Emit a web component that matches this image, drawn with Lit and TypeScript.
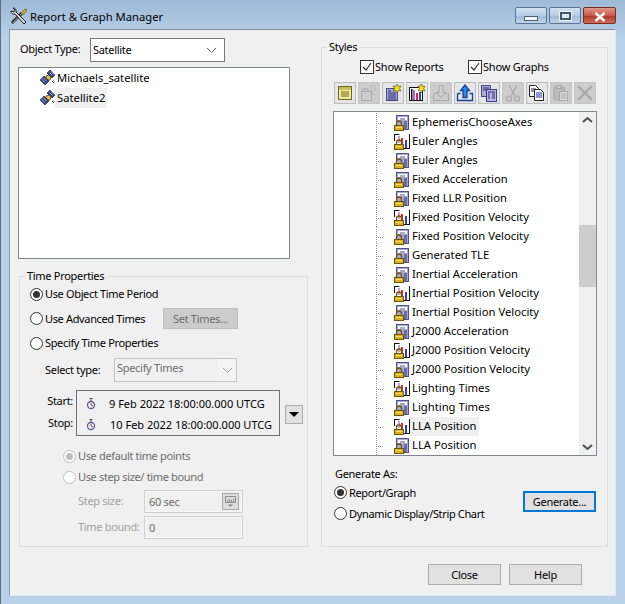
import { LitElement, css, html, svg } from "lit";
import { customElement } from "lit/decorators.js";
import { classMap } from "lit/directives/class-map.js";

const lock = svg`
  <path d="M2.500 11V8.500a2.500 2.500 0 0 1 5 0V11" fill="none" stroke="#6f5508" stroke-width="1.300"/>
  <rect x=".5" y="10.500" width="9" height="5" fill="#e0ae1c" stroke="#6f5508"/>
  <rect x="2" y="12" width="6" height="1" fill="#f8e07a"/>`;

const reportIcon = html`<svg class="ico" width="16" height="16" viewBox="0 0 16 16">
  <rect x="2.500" y=".5" width="12" height="14" fill="#a9a9d6" stroke="#50508e"/>
  <rect x="4" y="2" width="9" height="3" fill="#fff"/>
  <path d="M6 4h5" stroke="#50508e"/>
  <path d="M10 7h3M10 9h3M10 11h3M10 13h3" stroke="#2c2c78"/>
  ${lock}
</svg>`;

const graphIcon = html`<svg class="ico" width="16" height="16" viewBox="0 0 16 16">
  <rect x="1" y=".5" width="14" height="14" fill="#fff"/>
  <path d="M.5 0v7M.5 .5h5M15.500 0v15M10 14.500h6" stroke="#111" fill="none"/>
  <rect x="4" y="2" width="2" height="7" fill="#c8a0d8"/>
  <rect x="7" y="4" width="2" height="10" fill="#d83030"/>
  <rect x="11" y="6" width="2" height="8" fill="#3040c0"/>
  ${lock}
</svg>`;

const satelliteIcon = html`<svg class="ico" width="16" height="16" viewBox="0 0 16 16">
  <path d="M10 0l5 5-3 3-5-5z" fill="#32407e" stroke="#141a40" stroke-width=".6"/>
  <path d="M4 6l5 5-4 4-5-5z" fill="#32407e" stroke="#141a40" stroke-width=".6"/>
  <path d="M6 6l3-1 2 2-1 3-2 0-2-2z" fill="#e2c23c" stroke="#222" stroke-width=".7"/>
  <path d="M11 1.500l3 3M9.500 2.500l3 3M3 7.500l3.500 3.500M1.500 9l3.500 3.500" stroke="#dfe3f4" stroke-width=".7"/>
  <path d="M12 11l2 2M13.500 10.500l1 1" stroke="#333"/>
</svg>`;

const clockIcon = html`<svg width="10" height="13" viewBox="0 0 10 13">
  <path d="M3.500 1.500h3M5 2v2" stroke="#555" fill="none"/>
  <circle cx="5" cy="8" r="3.500" fill="#f3f3f8" stroke="#5b5b9a" stroke-width="1.300"/>
  <path d="M5 8V6M5 8l2 1" stroke="#a04040"/>
</svg>`;

const toolIcons = [
  html`<svg width="16" height="16" viewBox="0 0 16 16"><rect x="1.500" y="1.500" width="13" height="13" fill="#f3ea96" stroke="#6e6824"/><rect x="2" y="2" width="12" height="3" fill="#c8bd5c"/><path d="M4 7h8M4 9h8M4 11h8" stroke="#6e6824"/></svg>`,
  html`<svg width="18" height="18" viewBox="0 0 18 18" fill="none" stroke="#a8a8a8"><path d="M1.500 7.500h10v9h-10z"/><path d="M3 7V5h5v2"/><circle cx="13" cy="4" r="2.500" stroke-dasharray="1.500 1"/><path d="M12 9l3 2" stroke-dasharray="1.500 1"/></svg>`,
  html`<svg width="18" height="18" viewBox="0 0 18 18"><rect x="2.500" y="4.500" width="11" height="12" fill="#a9a9d6" stroke="#4a4a8a"/><path d="M4 7h3M4 9h8M4 11h8M4 13h8M4 15h8" stroke="#2c2c78"/><path d="M13 0l1.300 2.400L17 2l-1.500 2.400L17 7l-2.700-.6L13 9l-1.300-2.600L9 7l1.500-2.600L9 2l2.700.4z" fill="#f5e10a" stroke="#222" stroke-width=".5"/></svg>`,
  html`<svg width="18" height="18" viewBox="0 0 18 18"><rect x="1.500" y="3.500" width="13" height="13" fill="#fff" stroke="#111"/><rect x="3" y="5" width="1.500" height="11" fill="#111"/><rect x="5" y="6" width="2" height="10" fill="#c060d0"/><rect x="8" y="9" width="2" height="7" fill="#d83030"/><rect x="11" y="8" width="2" height="8" fill="#3040c0"/><path d="M13.500 0l1.200 2.300L17 2l-1.300 2.400L17 7l-2.300-.6L13.500 9l-1.200-2.600L10 7l1.300-2.600L10 2l2.300.3z" fill="#f5e10a" stroke="#222" stroke-width=".5"/></svg>`,
  html`<svg width="18" height="18" viewBox="0 0 18 18" fill="none" stroke="#a8a8a8"><path d="M1.500 9.500v7h15v-7h-3M1.500 9.500h3"/><path d="M7 1.500h4v7h2.500L9 13.500 4.500 8.500H7z"/></svg>`,
  html`<svg width="18" height="18" viewBox="0 0 18 18" fill="none" stroke="#14409a" stroke-width="1.300"><path d="M1.500 9.500v7h15v-7h-3M1.500 9.500h3"/><path d="M7 13.500V6.500H4.500L9 1l4.500 5.500H11v7z" fill="#2f8ee0"/></svg>`,
  html`<svg width="18" height="18" viewBox="0 0 18 18"><rect x="1.500" y="1.500" width="9" height="11" fill="#a9a9d6" stroke="#4a4a8a"/><path d="M3 4h6M3 6h3" stroke="#2c2c78"/><rect x="6.500" y="5.500" width="10" height="12" fill="#b6b6de" stroke="#3c3c80"/><path d="M8 8h7M8 10h2M12 10h3M8 12h2M12 12h3M8 14h2M12 14h3" stroke="#2c2c78"/></svg>`,
  html`<svg width="16" height="18" viewBox="0 0 16 18" fill="none" stroke="#a8a8a8" stroke-width="1.200"><path d="M4 1l6 11M12 1L6 12"/><circle cx="4" cy="14.500" r="2.500"/><circle cx="12" cy="14.500" r="2.500"/></svg>`,
  html`<svg width="18" height="18" viewBox="0 0 18 18"><path d="M1.500 1.500h6l3 3v8h-9z" fill="#fff" stroke="#222"/><path d="M3 5h5M3 7h3" stroke="#222"/><path d="M6.500 5.500h6l3 3v8h-9z" fill="#fff" stroke="#222"/><path d="M8 9h6M8 11h6M8 13h6" stroke="#1c2cb0"/></svg>`,
  html`<svg width="18" height="18" viewBox="0 0 18 18" fill="none" stroke="#a8a8a8" stroke-width="1.200"><rect x="2" y="3" width="10" height="13" rx="1" fill="#bcbcbc"/><rect x="5" y="1.500" width="4" height="3" fill="#d8d8d8"/><path d="M7.500 7.500h8v9h-8z" fill="#dcdcdc"/><path d="M9 10h5M9 12h5M9 14h5"/></svg>`,
  html`<svg width="18" height="18" viewBox="0 0 18 18" stroke="#a8a8a8" stroke-width="2.200"><path d="M2 2l14 14M16 2L2 16"/></svg>`,
];

const toolDisabled = [1, 4, 7, 9, 10];

const styleRows: [string, "r" | "g"][] = [
  ["EphemerisChooseAxes", "r"],
  ["Euler Angles", "g"],
  ["Euler Angles", "r"],
  ["Fixed Acceleration", "r"],
  ["Fixed LLR Position", "r"],
  ["Fixed Position Velocity", "g"],
  ["Fixed Position Velocity", "r"],
  ["Generated TLE", "r"],
  ["Inertial Acceleration", "r"],
  ["Inertial Position Velocity", "g"],
  ["Inertial Position Velocity", "r"],
  ["J2000 Acceleration", "r"],
  ["J2000 Position Velocity", "g"],
  ["J2000 Position Velocity", "r"],
  ["Lighting Times", "g"],
  ["Lighting Times", "r"],
  ["LLA Position", "g"],
  ["LLA Position", "r"],
];

const chevron = html`<svg width="11" height="7" viewBox="0 0 11 7" fill="none" stroke="#606060"><path d="M1 1l4.500 4.500L10 1"/></svg>`;

@customElement("app-root")
export class AppRoot extends LitElement {
  private radio(label: string, on = false, off = false) {
    return html`<label class=${classMap({ opt: true, off })}>
      <span class=${classMap({ radio: true, on })}></span>${label}
    </label>`;
  }

  private check(label: string) {
    return html`<label class="opt chk">
      <svg class="box" width="14" height="14" viewBox="0 0 14 14">
        <rect x=".5" y=".5" width="13" height="13" fill="#fff" stroke="#333"/>
        <path d="M3 7l3 3 5-7" fill="none" stroke="#333" stroke-width="1.200"/>
      </svg>${label}
    </label>`;
  }

  render() {
    return html`
      <div class="window">
        <header class="title">
          <svg width="18" height="18" viewBox="0 0 18 18">
            <path d="M2 16L12 6" stroke="#222" stroke-width="3"/>
            <path d="M3 16l9-10" stroke="#c0c0c0" stroke-width="1"/>
            <path d="M11 7l4-5 2 1-4 5z" fill="#d8b820" stroke="#5a5210" stroke-width=".7"/>
            <path d="M1 4a3 3 0 0 0 4 3l9 10 2-2L6 5a3 3 0 0 0-3-4l2 2-1 2z" fill="#d8d8d8" stroke="#222"/>
          </svg>
          <span class="title-text">Report &amp; Graph Manager</span>
          <div class="caption">
            <button class="cap"><span class="glyph-min"></span></button>
            <button class="cap"><span class="glyph-max"></span></button>
            <button class="cap close">
              <svg width="14" height="10" viewBox="0 0 14 10" stroke="#fff" stroke-width="2.400"><path d="M2.500 1l9 8M11.500 1l-9 8"/></svg>
            </button>
          </div>
        </header>

        <div class="client">
          <div class="panes">
            <section class="left">
              <div class="object-row">
                <span>Object Type:</span>
                <div class="select object-select">Satellite ${chevron}</div>
              </div>
              <div class="tree">
                <div class="tree-row">${satelliteIcon}<span class="tree-label">Michaels_satellite</span></div>
                <div class="tree-row">${satelliteIcon}<span class="tree-label sel">Satellite2</span></div>
              </div>

              <fieldset class="group time-group">
                <legend>Time Properties</legend>
                <div class="row r1">${this.radio("Use Object Time Period", true)}</div>
                <div class="row r2">
                  ${this.radio("Use Advanced Times")}
                  <button class="btn set-times" disabled>Set Times...</button>
                </div>
                <div class="row r3">${this.radio("Specify Time Properties")}</div>
                <div class="row type-row">
                  <span>Select type:</span>
                  <div class="select type-select"><span>Specify Times</span><i>${chevron}</i></div>
                </div>
                <div class="row times-row">
                  <div class="time-labels"><span>Start:</span><span>Stop:</span></div>
                  <div class="times">
                    <div class="time-line">${clockIcon}<span>9 Feb 2022 18:00:00.000 UTCG</span></div>
                    <div class="time-line">${clockIcon}<span class="t2">10 Feb 2022 18:00:00.000 UTCG</span></div>
                  </div>
                  <button class="drop"><span></span></button>
                </div>
                <div class="sub">
                  ${this.radio("Use default time points", true, true)}
                  ${this.radio("Use step size/ time bound", false, true)}
                </div>
                <div class="field first">
                  <span>Step size:</span>
                  <div class="input">60 sec
                    <svg class="unit" width="17" height="17" viewBox="0 0 17 17">
                      <rect x=".5" y=".5" width="16" height="16" fill="#dcdcdc" stroke="#aaa"/>
                      <path d="M3.500 3.500h10v6h-10zM5.500 9V7M7.500 9V6M9.500 9V7M11.500 9V6" fill="none" stroke="#8a8a8a"/>
                      <path d="M6 11.500h5L8.500 14z" fill="#8a8a8a"/>
                    </svg>
                  </div>
                </div>
                <div class="field">
                  <span>Time bound:</span>
                  <div class="input">0</div>
                </div>
              </fieldset>
            </section>

            <fieldset class="group styles">
              <legend>Styles</legend>
              <div class="checks">
                ${this.check("Show Reports")}${this.check("Show Graphs")}
              </div>
              <div class="toolbar">
                ${toolIcons.map(
                  (icon, i) => html`<button
                    class=${classMap({ tool: true, dim: toolDisabled.includes(i) })}
                  >${icon}</button>`,
                )}
              </div>
              <div class="list">
                <div class="rows">
                  ${styleRows.map(
                    ([name, kind], i) => html`<div class="style-row">
                      <span class="branch"></span>
                      ${kind === "g" ? graphIcon : reportIcon}
                      <span class=${classMap({ "style-name": true, sel: i === 16 })}>${name}</span>
                    </div>`,
                  )}
                </div>
                <div class="scroll">
                  <svg width="17" height="17" viewBox="0 0 17 17" fill="none" stroke="#505050" stroke-width="2"><path d="M4 10l4.500-4 4.500 4"/></svg>
                  <div class="track"><div class="thumb"></div></div>
                  <svg width="17" height="17" viewBox="0 0 17 17" fill="none" stroke="#505050" stroke-width="2"><path d="M4 7l4.500 4 4.500-4"/></svg>
                </div>
              </div>
              <div class="generate">
                <div class="gen-opts">
                  <span class="gen-title">Generate As:</span>
                  ${this.radio("Report/Graph", true)}
                  ${this.radio("Dynamic Display/Strip Chart")}
                </div>
                <button class="btn default">Generate...</button>
              </div>
            </fieldset>
          </div>

          <footer class="actions">
            <button class="btn">Close</button>
            <button class="btn">Help</button>
          </footer>
        </div>
      </div>
    `;
  }

  static styles = css`
    :host {
      display: block;
      width: 625px;
      height: 604px;
      overflow: hidden;
      font: 11px/16px "Noto Sans", sans-serif;
      letter-spacing: -0.3px;
      color: #000;
    }

    * {
      box-sizing: border-box;
    }

    .window {
      height: 604px;
      display: flex;
      flex-direction: column;
      background: linear-gradient(#9fbad6 0, #b9d1ea 40px);
      border-left: 1px solid #5d6f80;
    }

    .title {
      height: 29px;
      flex: none;
      display: flex;
      align-items: center;
      padding: 0 9px;
      gap: 2px;
    }

    .title-text {
      font-size: 11.25px;
      letter-spacing: 0;
      padding-top: 5px;
    }

    .title svg {
      margin-top: 2px;
    }

    .caption {
      margin-left: auto;
      display: flex;
      gap: 2px;
      align-self: flex-start;
      padding-top: 7px;
    }

    .cap {
      width: 32px;
      height: 17px;
      padding: 0;
      display: flex;
      align-items: center;
      justify-content: center;
      border: 1px solid #5a7590;
      border-radius: 2px;
      background: linear-gradient(#d3e3f3 0, #b4cce4 50%, #9db9d6 51%, #bfd5ea 100%);
    }

    .cap.close {
      width: 33px;
      border-color: #7a2a20;
      background: linear-gradient(#dd9a8c 0, #c8584a 50%, #b03828 51%, #cf6a58 100%);
    }

    .glyph-min {
      width: 14px;
      height: 5px;
      margin-top: 5px;
      background: #f4f8fc;
      border: 1px solid #4a5f78;
    }

    .glyph-max {
      width: 11px;
      height: 8px;
      border: 2px solid #3f5570;
      background: #dbe7f3;
      outline: 1px solid #eef4fa;
    }

    .client {
      flex: 1;
      margin: 0 9px 8px 8px;
      background: #f0f0f0;
      border: 1px solid #8c9cac;
      border-color: #7d8b99 #e4e8ec #e4e8ec #8c9cac;
      display: flex;
      flex-direction: column;
    }

    .panes {
      display: grid;
      grid-template-columns: 311px 287px;
      align-items: start;
    }

    .left {
      padding: 8px 0 0 10px;
    }

    .object-row {
      display: flex;
      align-items: center;
      height: 24px;
    }

    .object-row > span {
      margin-top: -3px;
      width: 70px;
      white-space: nowrap;
    }

    .select {
      display: flex;
      align-items: center;
      justify-content: space-between;
      border: 1px solid #7a7a7a;
      background: #fff;
    }

    .object-select {
      width: 135px;
      height: 24px;
      padding: 0 7px 0 2px;
    }

    .tree {
      margin: 5px 0 0 -2px;
      width: 272px;
      height: 192px;
      background: #fff;
      border: 1px solid #828790;
      font-size: 11.25px;
      letter-spacing: 0;
    }

    .tree-row {
      height: 20px;
      display: flex;
      align-items: center;
      padding-left: 21px;
    }

    .tree-label {
      margin-left: -1px;
      padding: 0 2px;
      height: 20px;
      line-height: 19px;
    }

    .sel {
      background: #f0f0f0;
    }

    .group {
      margin: 0;
      padding: 0;
      border: 1px solid #dcdcdc;
      min-width: 0;
    }

    legend {
      padding: 0 2px;
      line-height: 16px;
    }

    .time-group legend {
      margin-left: -5px;
    }

    .styles legend {
      margin-left: -6px;
    }

    .group.time-group {
      margin: 9px 0 0 -1px;
      width: 289px;
      height: 279px;
      padding-left: 10px;
    }

    .row {
      display: flex;
      align-items: center;
    }

    .r1 {
      height: 20px;
    }

    .r2 {
      height: 21px;
      margin-top: 4px;
    }

    .r2 .opt {
      width: 120px;
    }

    .r3 {
      height: 20px;
      margin-top: 4px;
    }

    .opt {
      display: flex;
      align-items: center;
      gap: 2px;
      white-space: nowrap;
      letter-spacing: -0.35px;
    }

    .opt.off {
      color: #6d6d6d;
    }

    .radio {
      width: 13px;
      height: 13px;
      flex: none;
      border: 1px solid #333;
      border-radius: 50%;
      background: #fff;
      display: flex;
      align-items: center;
      justify-content: center;
    }

    .radio.on::after {
      content: "";
      width: 7px;
      height: 7px;
      border-radius: 50%;
      background: #333;
    }

    .off .radio {
      border-color: #bcbcbc;
    }

    .off .radio.on::after {
      background: #bcbcbc;
    }

    .btn {
      width: 73px;
      height: 21px;
      padding: 0;
      border: 1px solid #adadad;
      background: #e1e1e1;
      font: inherit;
      letter-spacing: inherit;
      color: #000;
    }

    .set-times {
      margin-left: 13px;
      width: 75px;
      background: #cccccc;
      border-color: #bfbfbf;
      color: #6d6d6d;
    }

    .type-row {
      margin-top: 5px;
      padding-left: 15px;
      height: 24px;
    }

    .type-row > span {
      width: 69px;
    }

    .type-select {
      width: 123px;
      height: 24px;
      border-color: #c4c4c4;
      background: #f0f0f0;
      color: #6d6d6d;
      padding-left: 2px;
    }

    .type-select span {
      margin-top: -4px;
    }

    .type-select i {
      width: 18px;
      height: 22px;
      display: flex;
      align-items: center;
      justify-content: center;
      background: #f6f6f6;
      opacity: 0.6;
    }

    .times-row {
      margin-top: 8px;
      align-items: flex-start;
    }

    .time-labels {
      width: 46px;
      height: 46px;
      padding: 3px 3px 0 0;
      display: flex;
      flex-direction: column;
      align-items: flex-end;
      gap: 6px;
    }

    .times {
      width: 204px;
      height: 46px;
      border: 1px solid #707070;
      padding: 2px 0 0 9px;
      letter-spacing: 0;
    }

    .time-line {
      display: flex;
      align-items: center;
      height: 21px;
      gap: 13px;
    }

    .t2 {
      margin-left: 1px;
    }

    .drop {
      width: 18px;
      height: 19px;
      margin: 15px 0 0 5px;
      padding: 0;
      border: 1px solid #adadad;
      background: #e1e1e1;
      display: flex;
      align-items: center;
      justify-content: center;
    }

    .drop span {
      border: 5px solid transparent;
      border-top: 5px solid #000;
      border-bottom: 0;
    }

    .sub {
      margin: 10px 0 0 33px;
      display: flex;
      flex-direction: column;
      gap: 1px;
    }

    .sub .opt {
      height: 20px;
    }

    .field {
      display: flex;
      align-items: center;
      margin: 3px 0 0 48px;
      height: 23px;
      color: #a0a0a0;
    }

    .field > span {
      width: 66px;
      margin-top: -2px;
    }

    .input {
      width: 99px;
      height: 23px;
      border: 1px solid #d0d0d0;
      padding: 0 4px;
      line-height: 20px;
      color: #6d6d6d;
      display: flex;
      align-items: center;
      justify-content: space-between;
      box-shadow: inset 0 0 0 1px #f6f6f6;
    }

    .unit {
      margin-right: -1px;
    }

    .group.styles {
      margin-top: 9px;
      height: 508px;
      padding-left: 11px;
    }

    .checks {
      display: flex;
      height: 20px;
      margin-top: 2px;
      padding-left: 27px;
    }

    .chk {
      width: 108px;
      gap: 1px;
      letter-spacing: -0.2px;
    }

    .toolbar {
      display: flex;
      gap: 2px;
      margin: 5px 0 0 1px;
    }

    .tool {
      width: 22px;
      height: 22px;
      padding: 0;
      border: 1px solid #bdbdbd;
      background: #e6e6e6;
      display: flex;
      align-items: center;
      justify-content: center;
    }

    .tool.dim {
      background: #cdcdcd;
      border-color: #c6c6c6;
    }

    .list {
      width: 264px;
      height: 345px;
      margin-top: 7px;
      border: 1px solid #828790;
      background: #fff;
      display: flex;
      overflow: hidden;
      font-size: 11.25px;
      letter-spacing: 0;
    }

    .rows {
      flex: 1;
      min-width: 0;
      padding-top: 1px;
    }

    .style-row {
      height: 19px;
      display: flex;
      align-items: center;
      padding-left: 42px;
    }

    .branch {
      width: 18px;
      height: 19px;
      flex: none;
      background:
        repeating-linear-gradient(#999 0 1px, transparent 1px 2px) left top / 1px 100% no-repeat,
        repeating-linear-gradient(90deg, #999 0 1px, transparent 1px 2px) left 10px / 7px 1px no-repeat;
    }

    .style-name {
      padding: 0 2px;
      height: 19px;
      line-height: 18px;
      white-space: nowrap;
    }

    .scroll {
      width: 17px;
      background: #f0f0f0;
      display: flex;
      flex-direction: column;
    }

    .track {
      flex: 1;
      padding-top: 96px;
    }

    .thumb {
      height: 62px;
      background: #cdcdcd;
    }

    .generate {
      display: flex;
      justify-content: space-between;
      width: 264px;
      padding-left: 1px;
      margin-top: 10px;
    }

    .gen-opts {
      display: flex;
      flex-direction: column;
    }

    .gen-title {
      margin-left: 1px;
      height: 16px;
    }

    .gen-opts .opt {
      height: 21px;
    }

    .default {
      border: 2px solid #0078d7;
      margin: 25px 1px 0 0;
    }

    .actions {
      display: flex;
      justify-content: flex-end;
      gap: 8px;
      margin-top: 17px;
      padding-right: 33px;
    }
  `;
}

declare global {
  interface HTMLElementTagNameMap {
    "app-root": AppRoot;
  }
}
